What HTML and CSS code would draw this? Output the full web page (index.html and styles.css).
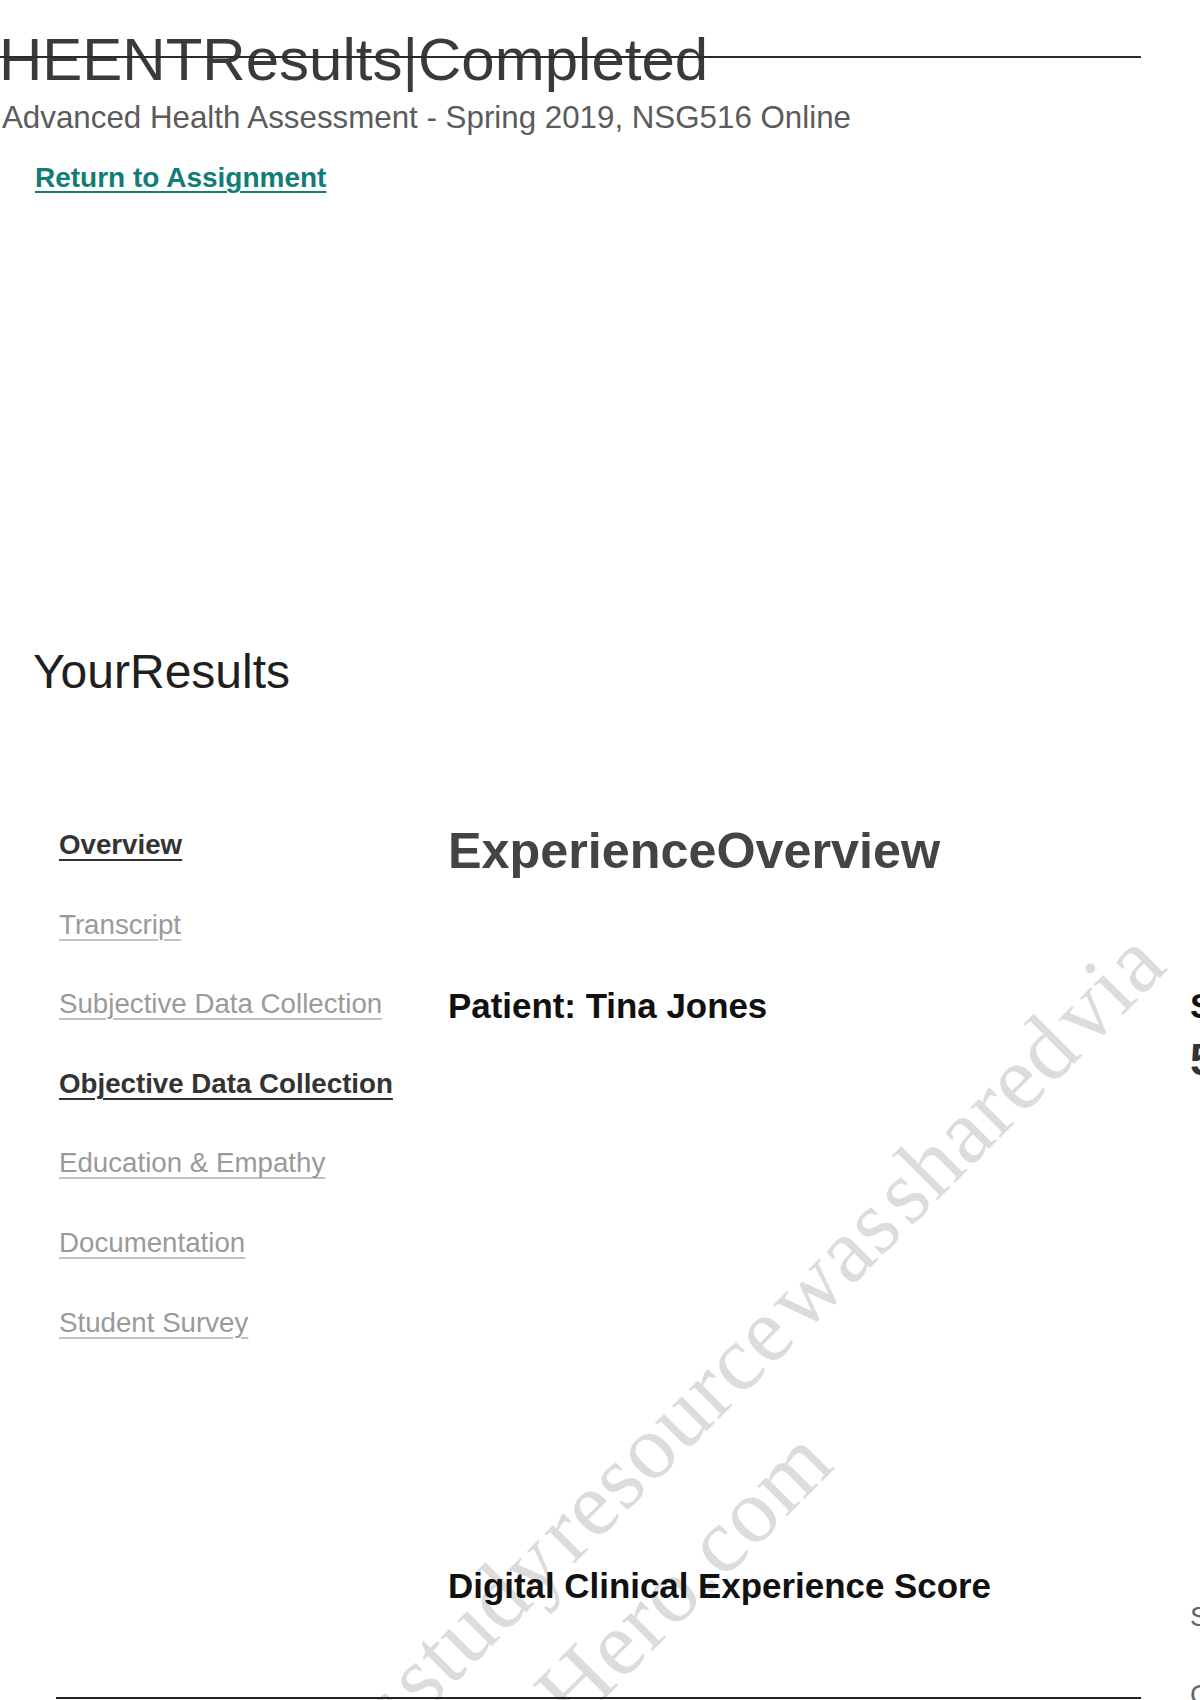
FILE: index.html
```html
<!DOCTYPE html>
<html lang="en">
<head>
<meta charset="utf-8">
<title>HEENT Results | Completed</title>
<link rel="stylesheet" href="styles.css">
</head>
<body>
<div class="page">
  <header class="head">
    <h1 class="title">HEENTResults|Completed</h1>
    <p class="course">Advanced Health Assessment - Spring 2019, NSG516 Online</p>
    <a class="back" href="#">Return to Assignment</a>
  </header>

  <h2 class="results">YourResults</h2>

  <div class="main">
    <nav class="side">
      <a class="nav-link active" href="#">Overview</a>
      <a class="nav-link" href="#">Transcript</a>
      <a class="nav-link" href="#">Subjective Data Collection</a>
      <a class="nav-link active" href="#">Objective Data Collection</a>
      <a class="nav-link" href="#">Education &amp; Empathy</a>
      <a class="nav-link" href="#">Documentation</a>
      <a class="nav-link" href="#">Student Survey</a>
    </nav>

    <section class="content">
      <h3 class="exp">ExperienceOverview</h3>

      <div class="row patient-row">
        <div class="cell-left">Patient: Tina Jones</div>
        <div class="cell-right">
          <div class="r-label">Started: Mar 02, 2019</div>
          <div class="r-value">55 min</div>
        </div>
      </div>

      <div class="row score-row">
        <div class="cell-left">Digital Clinical Experience Score</div>
        <div class="cell-right gray-col">
          <div>Student Performance Index</div>
          <div>Correct</div>
        </div>
      </div>
    </section>
  </div>

  <div class="rule"></div>

  <div class="watermark">This study resource was shared via<br>CourseHero.com</div>
</div>
</body>
</html>
```

FILE: styles.css
```css
html, body {
  margin: 0;
  padding: 0;
  background: #ffffff;
}

body {
  font-family: "Liberation Sans", Arial, Helvetica, sans-serif;
}

.page {
  position: relative;
  width: 1200px;
  height: 1700px;
  overflow: hidden;
}

.head {
  padding: 30px 0 0 2px;
}

.title {
  position: relative;
  margin: 0 0 0 -3px;
  font-size: 60px;
  line-height: 60px;
  font-weight: 400;
  color: #3a3a3a;
  white-space: nowrap;
}

.title::after {
  content: "";
  position: absolute;
  left: 1px;
  top: 26px;
  width: 1141px;
  height: 2px;
  background: #2a2a2a;
}

.course {
  margin: 10px 0 0;
  font-size: 31.3px;
  line-height: 36px;
  color: #5b5b5b;
  white-space: nowrap;
}

.back {
  display: block;
  width: max-content;
  margin: 26px 0 0 33px;
  font-size: 28px;
  line-height: 32px;
  font-weight: 700;
  color: #127c76;
  text-decoration: underline;
  text-decoration-thickness: 2px;
  text-underline-offset: 4px;
}

.results {
  margin: 450px 0 0 33px;
  font-size: 48px;
  line-height: 56px;
  font-weight: 400;
  color: #1f1f1f;
}

.main {
  position: relative;
  z-index: 1;
  display: flex;
  margin-top: 123px;
  padding-left: 59px;
}

.side {
  flex: none;
  width: 389px;
  display: flex;
  flex-direction: column;
  align-items: flex-start;
  gap: 47.6px;
  padding-top: 6px;
}

.nav-link {
  font-size: 27.7px;
  line-height: 32px;
  color: #9a9a9a;
  text-decoration: underline;
  text-decoration-color: #c2c2c2;
  text-decoration-thickness: 2px;
  text-underline-offset: 5px;
  white-space: nowrap;
}

.nav-link.active {
  color: #333333;
  font-weight: 700;
  text-decoration-color: #333333;
}

.content {
  flex: 1;
  min-width: 0;
}

.exp {
  margin: 0;
  font-size: 50.3px;
  line-height: 56px;
  font-weight: 700;
  color: #444444;
  white-space: nowrap;
}

.row {
  display: grid;
  grid-template-columns: 742px auto;
}

.patient-row {
  margin-top: 107px;
}

.cell-left {
  font-size: 34.9px;
  line-height: 40px;
  font-weight: 700;
  color: #111111;
  white-space: nowrap;
}

.cell-right {
  white-space: nowrap;
}

.r-label {
  font-size: 34.9px;
  line-height: 40px;
  font-weight: 700;
  color: #111111;
}

.r-value {
  margin-top: 9px;
  font-size: 44px;
  line-height: 50px;
  font-weight: 700;
  color: #333333;
}

.score-row {
  margin-top: 481px;
  height: 131px;
}

.gray-col {
  display: flex;
  flex-direction: column;
  gap: 46px;
  padding-top: 35px;
  font-size: 27.7px;
  line-height: 32px;
  color: #666666;
}

.rule {
  position: relative;
  z-index: 1;
  margin-left: 56px;
  width: 1085px;
  border-top: 2px solid #222222;
}

.watermark {
  position: absolute;
  left: 239px;
  top: 1773px;
  z-index: 0;
  transform-origin: 0 0;
  transform: rotate(-45deg);
  font-family: "Liberation Serif", "Times New Roman", serif;
  font-size: 92px;
  line-height: 117px;
  letter-spacing: 1px;
  word-spacing: -0.2em;
  color: #dcdcdc;
  white-space: nowrap;
  pointer-events: none;
}
```
